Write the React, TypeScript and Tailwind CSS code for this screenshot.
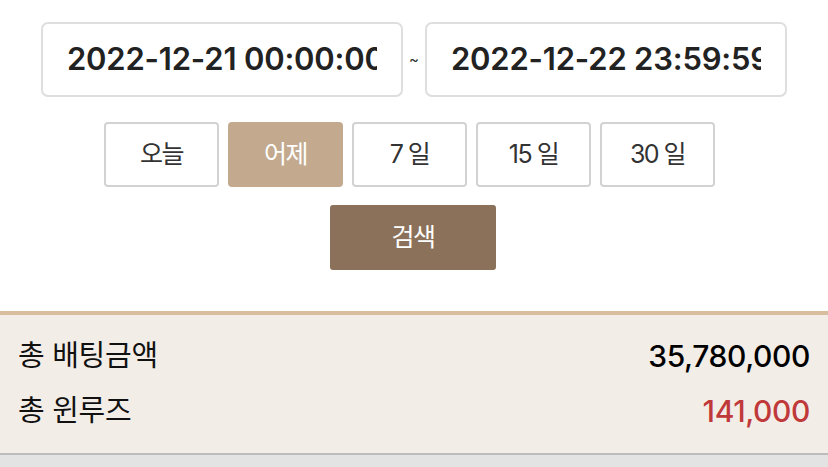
import React, { useState } from 'react';

const periods = ['오늘', '어제', '7 일', '15 일', '30 일'];

const fontKr = "font-['Inter','Noto_Sans_CJK_KR',sans-serif]";

function DateBox({ value }: { value: string }) {
  return (
    <div className="w-[362px] h-[75px] rounded-[7px] border-2 border-[#dedede] px-[24px] flex items-center">
      <div className="w-full overflow-hidden">
        <span className="block text-[31px] font-semibold text-[#222] whitespace-nowrap tracking-[-0.2px]">
          {value}
        </span>
      </div>
    </div>
  );
}

export default function App() {
  const [active, setActive] = useState(1);

  return (
    <div className={`w-[828px] h-[467px] overflow-hidden bg-white ${fontKr}`}>
      {/* Date range */}
      <div className="flex items-center justify-center pt-[22px]">
        <DateBox value="2022-12-21 00:00:00" />
        <span className="w-[22px] text-center text-[15px] text-[#333] leading-none">~</span>
        <DateBox value="2022-12-22 23:59:59" />
      </div>

      {/* Quick periods */}
      <div className="flex justify-center gap-[9px] mt-[25px] pr-[9px]">
        {periods.map((p, i) => (
          <button
            key={p}
            onClick={() => setActive(i)}
            className={
              i === active
                ? 'w-[115px] h-[65px] rounded-[4px] bg-[#c3aa8f] text-white text-[25px] tracking-[-1.5px]'
                : 'w-[115px] h-[65px] rounded-[4px] border-2 border-[#d2d2d2] bg-white text-[#333] text-[25px] tracking-[-1.5px]'
            }
          >
            {p}
          </button>
        ))}
      </div>

      <div className="flex justify-center mt-[18px] pr-[2px]">
        <button className="w-[166px] h-[65px] rounded-[3px] bg-[#8b7159] text-white text-[25px] tracking-[-1.5px]">
          검색
        </button>
      </div>

      {/* Summary */}
      <div className="mt-[41px] border-t-4 border-[#d9bd9f] bg-[#f3ede7] h-[144px] px-[18px] pt-[18px] border-b-2 border-b-[#bdbbbb]">
        <div className="flex items-center justify-between h-[46px]">
          <span className="text-[29px] text-[#111] tracking-[-0.3px]">총 배팅금액</span>
          <span className="text-[30px] font-medium text-black tracking-[-0.4px]">35,780,000</span>
        </div>
        <div className="flex items-center justify-between h-[46px] mt-[9px]">
          <span className="text-[29px] text-[#111] tracking-[-0.3px]">총 윈루즈</span>
          <span className="text-[30px] font-medium text-[#c0393a] tracking-[-0.4px]">141,000</span>
        </div>
      </div>
      <div className="h-[20px] bg-[#e3e3e3]" />
    </div>
  );
}
